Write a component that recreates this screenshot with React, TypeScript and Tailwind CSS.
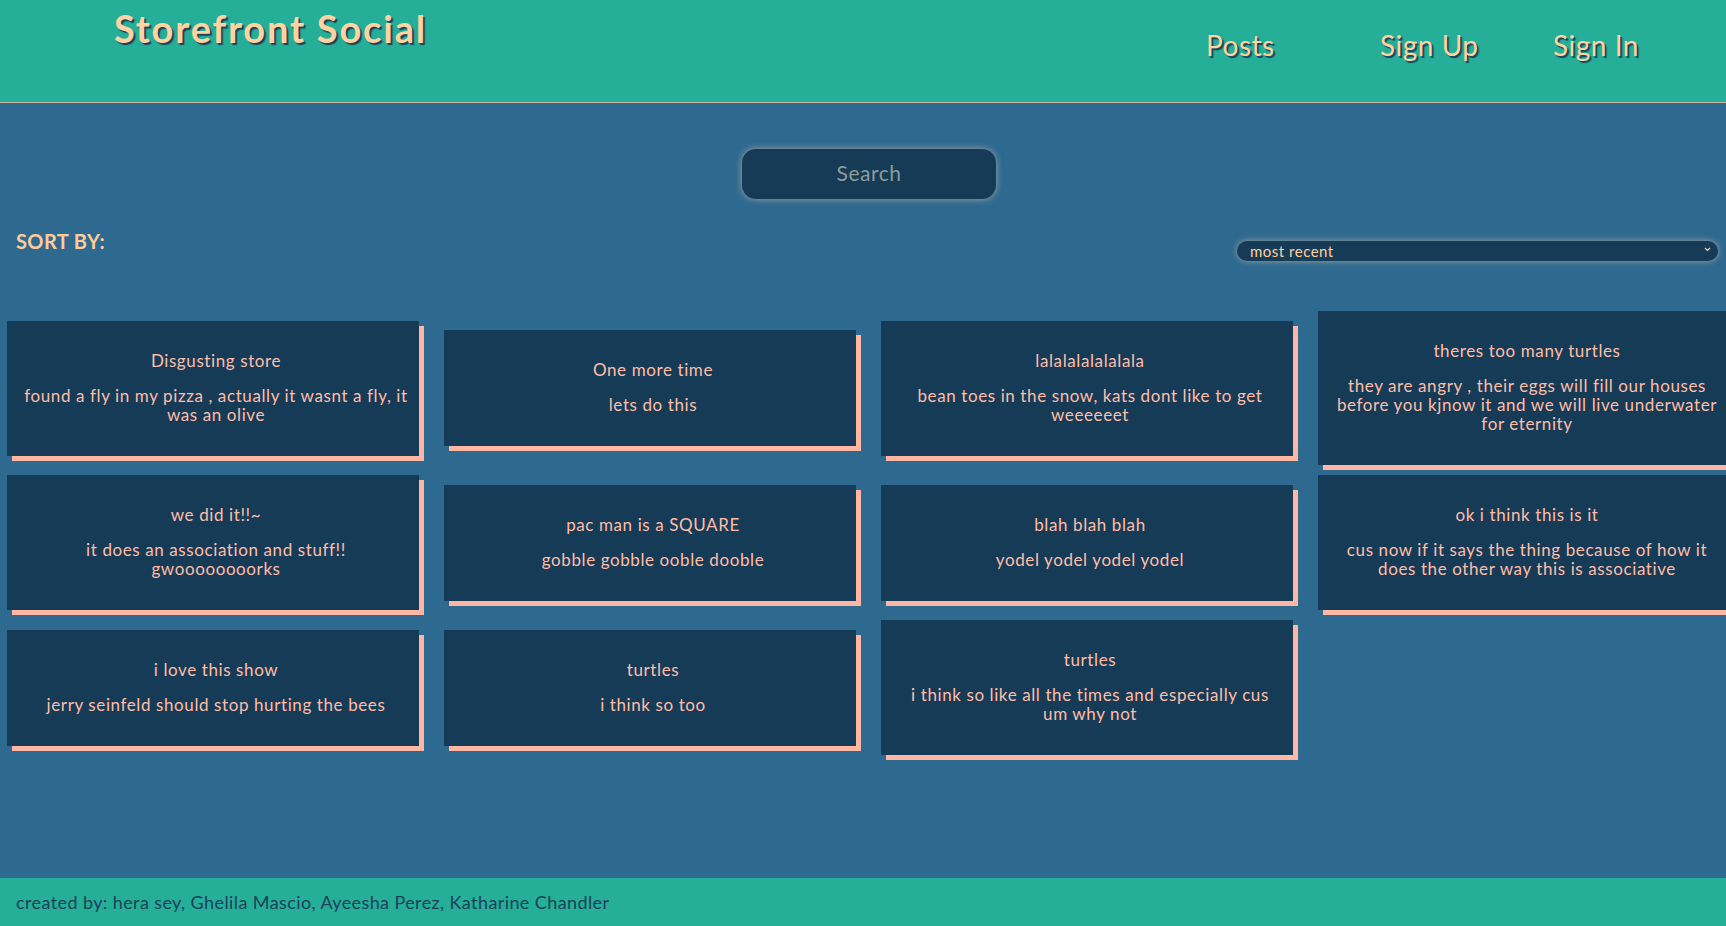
const posts = [
  { title: "Disgusting store", body: "found a fly in my pizza , actually it wasnt a fly, it was an olive" },
  { title: "One more time", body: "lets do this" },
  { title: "lalalalalalalala", body: "bean toes in the snow, kats dont like to get weeeeeet" },
  { title: "theres too many turtles", body: "they are angry , their eggs will fill our houses before you kjnow it and we will live underwater for eternity" },
  { title: "we did it!!~", body: "it does an association and stuff!! gwoooooooorks" },
  { title: "pac man is a SQUARE", body: "gobble gobble ooble dooble" },
  { title: "blah blah blah", body: "yodel yodel yodel yodel" },
  { title: "ok i think this is it", body: "cus now if it says the thing because of how it does the other way this is associative" },
  { title: "i love this show", body: "jerry seinfeld should stop hurting the bees" },
  { title: "turtles", body: "i think so too" },
  { title: "turtles", body: "i think so like all the times and especially cus um why not" },
];

function PostCard({ title, body }: { title: string; body: string }) {
  return (
    <div className="w-[412px] bg-[#163b56] shadow-[5px_5px_0_#ffb7a4] pl-[16px] pr-[10px] pt-[30px] pb-[32px] text-center text-[#ffbda8] text-[17px] leading-[19px] tracking-[0.6px]">
      <p>{title}</p>
      <p className="mt-[16px]">{body}</p>
    </div>
  );
}

export default function App() {
  return (
    <div className="min-h-screen flex flex-col overflow-x-hidden bg-[#2e6990] font-['Lato','Noto_Sans',sans-serif]">
      <header className="h-[103px] shrink-0 flex items-start bg-[#25af98] border-b border-[#c7b9a0]">
        <h1 className="pl-[114px] pt-[6px] text-[38px] leading-[1.2] font-bold tracking-[1.8px] text-[#ffd3a1] [text-shadow:2px_2px_1px_#1d4258]">
          Storefront Social
        </h1>
        <nav className="ml-auto flex pt-[29px] text-[28px] leading-[1.2] tracking-[0.5px] text-[#ffd3a1] [text-shadow:2px_2px_1px_#1d4258]">
          <a className="w-[174px]">Posts</a>
          <a className="w-[173px]">Sign Up</a>
          <a className="w-[173px]">Sign In</a>
        </nav>
      </header>

      <main className="flex-1">
        <div className="flex justify-center pl-[12px] mt-[46px]">
          <input
            placeholder="Search"
            className="w-[254px] h-[50px] pb-[3px] rounded-[14px] bg-[#163b56] text-center text-[21px] tracking-[0.5px] text-[#8e9a9a] placeholder:text-[#8e9a9a] outline-none shadow-[0_0_7px_rgba(255,215,170,0.55)]"
          />
        </div>

        <div className="flex items-start justify-between pl-[16px] pr-[8px] mt-[27px]">
          <h2 className="mt-[3px] text-[20px] leading-[24px] font-bold tracking-[0.4px] text-[#ffcb98]">SORT BY:</h2>
          <div className="relative mt-[13px] w-[481px]">
            <select className="appearance-none w-full h-[20px] rounded-full bg-[#163b56] pl-[13px] text-[15px] leading-[20px] tracking-[0.5px] text-[#ffcf9f] outline-none shadow-[0_0_6px_rgba(255,215,170,0.55)]">
              <option>most recent</option>
              <option>oldest</option>
            </select>
            <svg className="absolute right-[7px] top-[8px] w-[7px] h-[5px]" viewBox="0 0 7 5" fill="none">
              <path d="M1 1l2.5 2.5L6 1" stroke="#ffcf9f" strokeWidth="1.2" />
            </svg>
          </div>
        </div>

        <div className="grid grid-cols-[repeat(4,412px)] gap-x-[25px] gap-y-[10px] items-center pl-[7px] mt-[48px]">
          {posts.map((p, i) => (
            <PostCard key={i} title={p.title} body={p.body} />
          ))}
        </div>
      </main>

      <footer className="h-[48px] shrink-0 flex items-center px-[16px] bg-[#25af98] text-[18px] tracking-[0.4px] text-[#1b4158]">
        created by: hera sey, Ghelila Mascio, Ayeesha Perez, Katharine Chandler
      </footer>
    </div>
  );
}
